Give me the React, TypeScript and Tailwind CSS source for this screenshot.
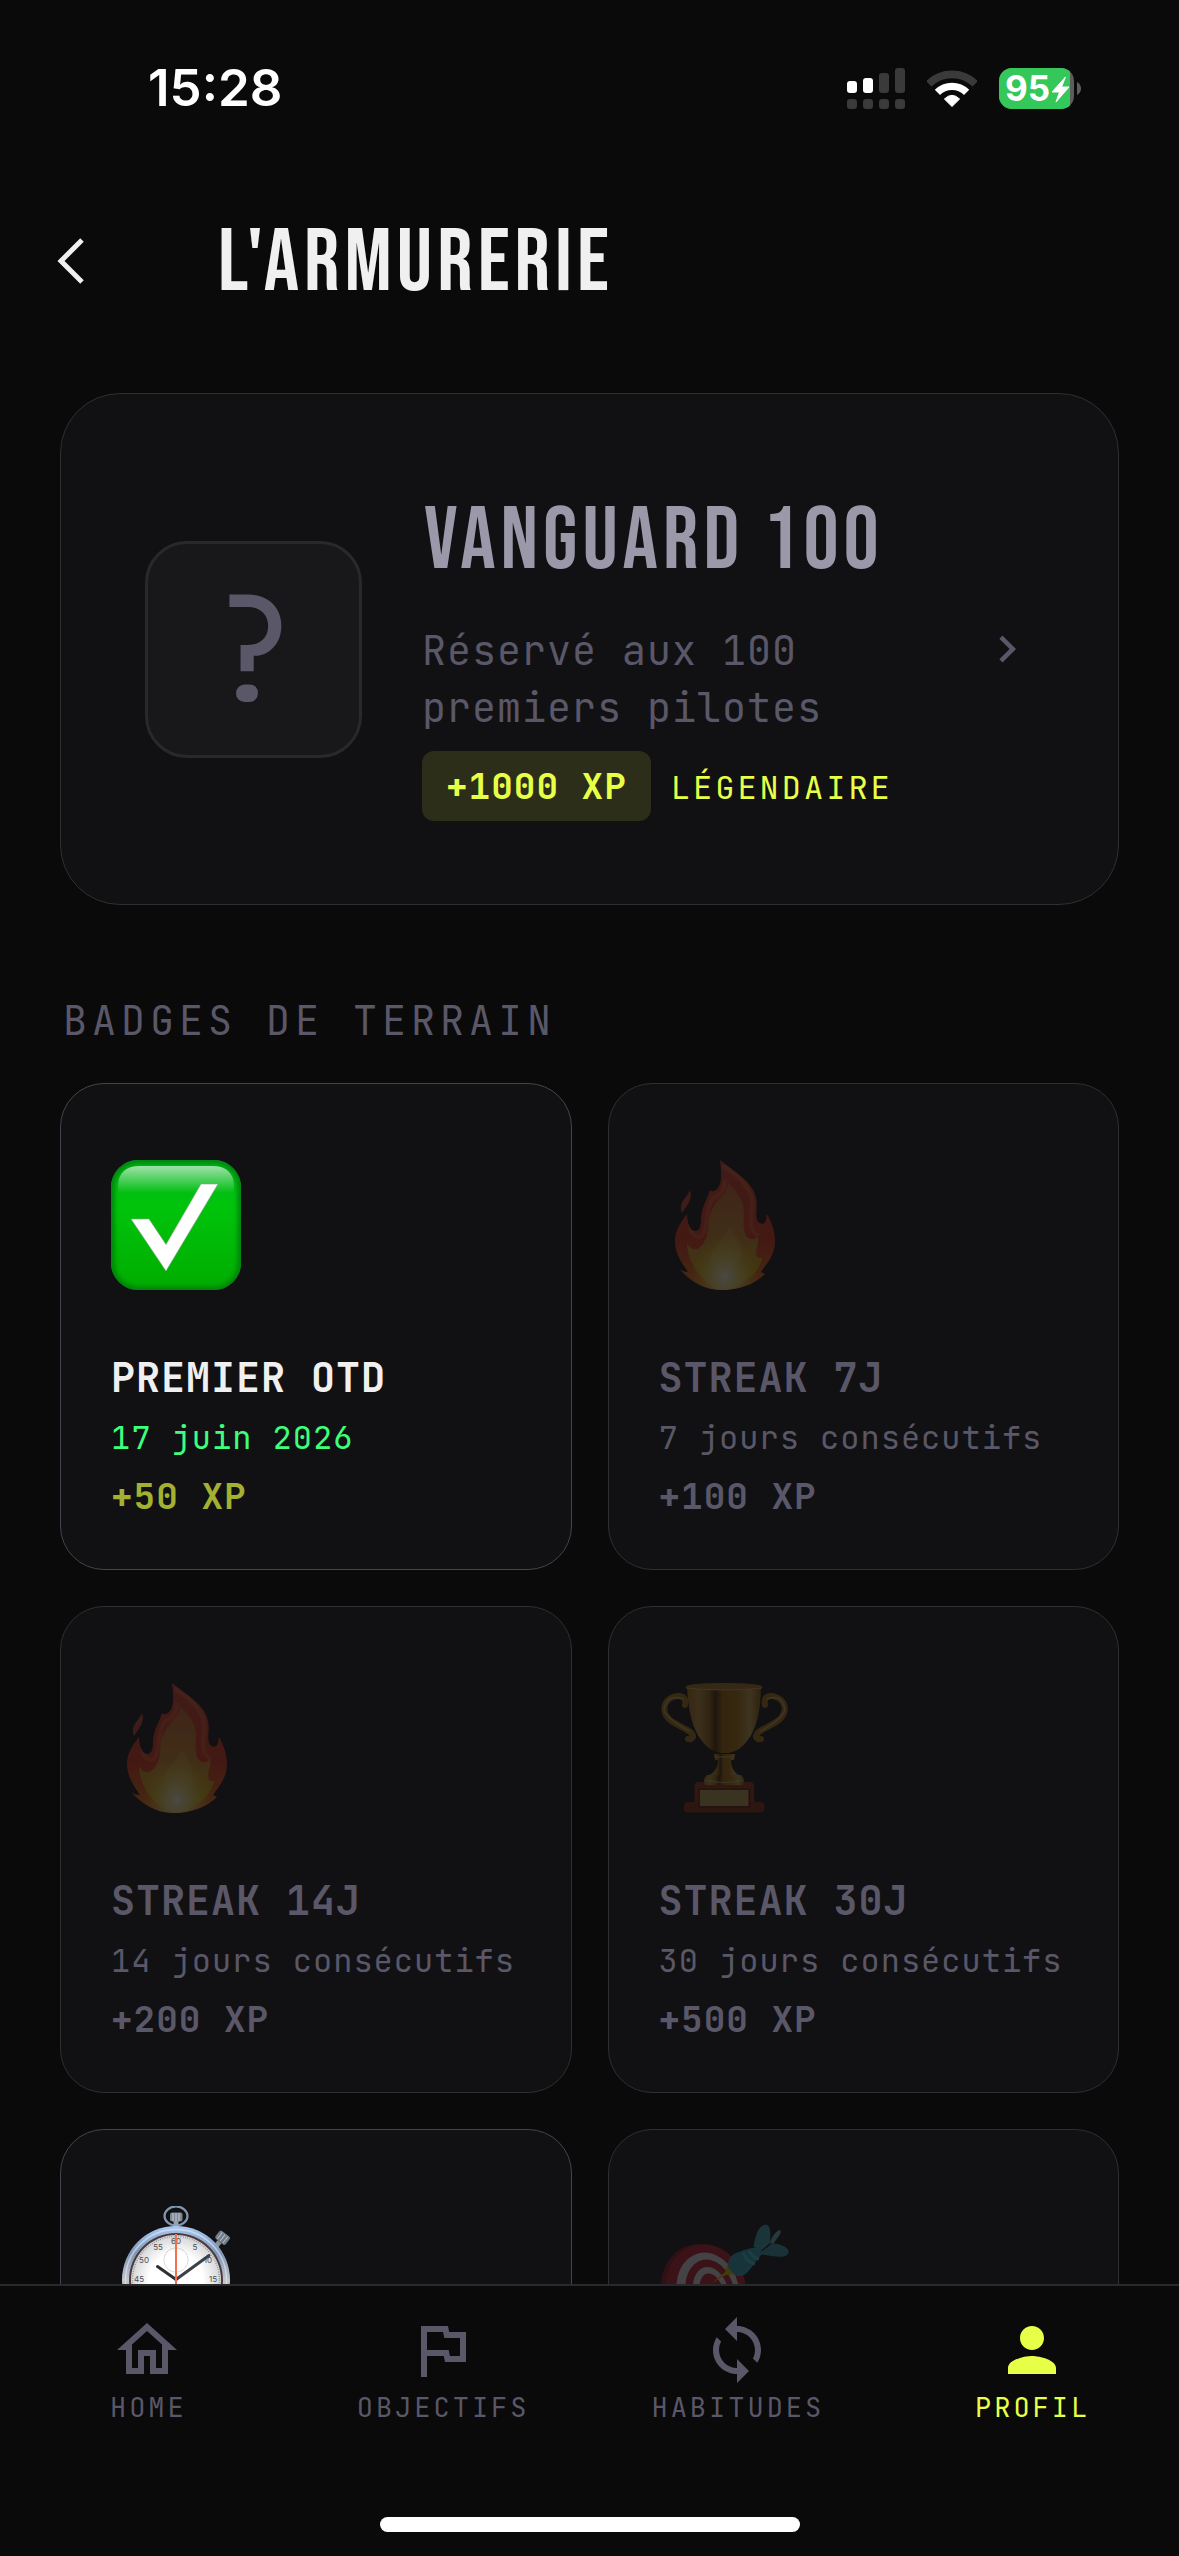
import type { ReactNode } from "react";
import { MdChevronRight, MdOutlineFlag, MdOutlineHome, MdPerson, MdSync } from "react-icons/md";

const mono = "font-['JetBrains_Mono','DejaVu_Sans_Mono',monospace]";
const display = "font-['Bebas_Neue','Oswald','Roboto',sans-serif]";

function SignalIcon() {
  return (
    <svg width="58" height="41" viewBox="0 0 58 41" aria-label="Réseau">
      <rect x="0" y="13" width="10" height="12" rx="3" fill="#fff" />
      <rect x="16" y="10" width="10" height="15" rx="3" fill="#fff" />
      <rect x="32" y="5" width="10" height="20" rx="3" fill="#3a3a3b" />
      <rect x="48" y="0" width="10" height="25" rx="3" fill="#3a3a3b" />
      {[0, 16, 32, 48].map((x) => (
        <rect key={x} x={x} y="31" width="10" height="10" rx="3" fill="#3a3a3b" />
      ))}
    </svg>
  );
}

function WifiIcon() {
  return (
    <svg width="50" height="41" viewBox="0 0 50 41" aria-label="Wi-Fi" fill="none">
      <path d="M1.8 15.8 A33.2 33.2 0 0 1 48.2 15.8" stroke="#3a3a3b" strokeWidth="7.6" />
      <path d="M10.4 24.4 A20.7 20.7 0 0 1 39.6 24.4" stroke="#fff" strokeWidth="7.4" />
      <path d="M25 38.5 L17.4 31 Q25 23.6 32.6 31 Z" fill="#fff" stroke="#fff" strokeLinejoin="round" />
    </svg>
  );
}

function BatteryIcon() {
  return (
    <svg width="82" height="41" viewBox="0 0 82 41" aria-label="Batterie">
      <clipPath id="battery-body">
        <rect width="75" height="41" rx="13" />
      </clipPath>
      <g clipPath="url(#battery-body)">
        <rect width="75" height="41" fill="#5c5c5d" />
        <rect width="71" height="41" fill="#34c759" />
      </g>
      <path d="M78 14 Q82 16.5 82 20.5 Q82 24.5 78 27 Z" fill="#5c5c5d" />
      <text x="6" y="33" fontSize="35" fontWeight="700" fill="#fff" fontFamily="Inter, sans-serif">
        95
      </text>
      <path d="M66.5 9 L53 24 H60.5 L57 34 L70 19 H62.5 Z" fill="#fff" stroke="#fff" strokeLinejoin="round" />
    </svg>
  );
}

function CheckEmoji() {
  return (
    <svg className="size-[130px]" viewBox="0 0 130 130" aria-hidden="true">
      <defs>
        <linearGradient id="check-body" x1="0" y1="0" x2="0" y2="1">
          <stop offset="0" stopColor="#00b41c" />
          <stop offset=".35" stopColor="#00c40c" />
          <stop offset="1" stopColor="#00ac00" />
        </linearGradient>
        <linearGradient id="check-gloss" x1="0" y1="0" x2="0" y2="1">
          <stop offset="0" stopColor="#fff" stopOpacity=".62" />
          <stop offset="1" stopColor="#fff" stopOpacity="0" />
        </linearGradient>
        <filter id="check-soft">
          <feGaussianBlur stdDeviation="2.5" />
        </filter>
        <clipPath id="check-clip">
          <rect width="130" height="130" rx="27" />
        </clipPath>
      </defs>
      <g clipPath="url(#check-clip)">
        <rect width="130" height="130" fill="url(#check-body)" />
        <rect width="130" height="130" rx="27" fill="none" stroke="#007a08" strokeWidth="6" filter="url(#check-soft)" />
        <path d="M7 33 V27 Q7 6 29 6 H101 Q123 6 123 27 V33 Z" fill="url(#check-gloss)" />
      </g>
      <path d="M20 59 H38 L55 84.5 L90 24 H107 L55 111 Z" fill="#fff" stroke="#8fa38f" strokeWidth=".6" />
    </svg>
  );
}

function FireEmoji() {
  return (
    <svg className="size-[130px]" viewBox="-16 0 130 130" aria-hidden="true">
      <defs>
        <linearGradient id="fire-outer" x1="0" y1="0" x2="0" y2="1">
          <stop offset="0" stopColor="#cc3c26" />
          <stop offset=".6" stopColor="#d83014" />
          <stop offset="1" stopColor="#e87410" />
        </linearGradient>
        <linearGradient id="fire-inner" x1="0" y1="0" x2="0" y2="1">
          <stop offset="0" stopColor="#cc6028" />
          <stop offset=".5" stopColor="#cc8426" />
          <stop offset="1" stopColor="#d8b800" />
        </linearGradient>
        <radialGradient id="fire-core" cx=".5" cy=".6" r=".5">
          <stop offset="0" stopColor="#f4f0d4" />
          <stop offset=".4" stopColor="#e8d880" stopOpacity=".75" />
          <stop offset="1" stopColor="#e0c400" stopOpacity="0" />
        </radialGradient>
        <clipPath id="fire-clip">
          <path d="M45 0 C60 12 78 22 81 38 C83 47 80 53 82 60 C84 65 90 65 91 60 C92 57 91 56 92 54 C97 63 100 72 100 81 C100 96 91 104 86 112 L90 114 C80 124 64 130 46 130 C30 130 14 121 5 109.5 Q9 112 13 112 C7 103 0 94 0 81 C0 70 6 62 12 54 C12 62 15 71 20 71 C25 71 26 66 26 58 C27 46 32 40 35 30 Q38 33 42 29 C48 23 46 10 45 0 Z" />
        </clipPath>
      </defs>
      <path d="M15 30 C18 40 12 45 7 53 C3 42 12 38 15 30 Z" fill="#c4402c" />
      <g clipPath="url(#fire-clip)">
        <rect x="-2" width="104" height="130" fill="url(#fire-outer)" />
        <path d="M48 6 C66 18 76 28 77 42 C77 60 72 70 84 76 M16 62 C14 72 20 80 27 76 C34 68 29 52 38 38 Q50 34 50 20" fill="none" stroke="#ff8a50" strokeOpacity=".3" strokeWidth="4" />
        <path d="M53 23 C64 34 69 42 69 54 C68 66 68 76 75 79 C79 80 82 78 83 76 C85 84 78 92 83 98 Q89 98 87 100 C82 116 66 126 48 131 C30 126 12 104 12 83 C15 90 22 92 28 84 C37 70 30 62 38 48 C43 38 53 34 53 23 Z" fill="url(#fire-inner)" />
        <ellipse cx="50" cy="108" rx="34" ry="42" fill="url(#fire-core)" />
        <path d="M54 66 C66 80 68 92 64 104 C58 116 42 116 36 102 C34 88 50 82 54 66 Z" fill="#f4d878" fillOpacity=".2" />
      </g>
    </svg>
  );
}

function TrophyEmoji() {
  return (
    <svg className="size-[130px]" viewBox="0 0 130 130" aria-hidden="true">
      <defs>
        <linearGradient id="gold" x1="0" y1="0" x2="1" y2="0">
          <stop offset="0" stopColor="#a86c10" />
          <stop offset=".16" stopColor="#b88c38" />
          <stop offset=".3" stopColor="#946008" />
          <stop offset=".38" stopColor="#482400" />
          <stop offset=".48" stopColor="#9c6000" />
          <stop offset=".68" stopColor="#a86c08" />
          <stop offset=".85" stopColor="#c09c48" />
          <stop offset="1" stopColor="#8c5808" />
        </linearGradient>
      </defs>
      <g fill="none" strokeLinecap="round">
        <g stroke="#a06c14" strokeWidth="6">
          <path d="M26 22 C28 12 20 12 14 14 C4 18 3 28 9 35 C17 44 34 46 34 54 Q32 57 29 56" />
          <path d="M106 22 C104 12 112 12 117 14 C127 18 128 28 122 35 C114 44 97 46 97 54 Q99 57 102 56" />
        </g>
        <g stroke="#c8a450" strokeWidth="1.5">
          <path d="M24 16 Q8 10 5 27 Q8 36 30 48" />
          <path d="M108 16 Q123 10 126 27 Q123 36 102 48" />
        </g>
      </g>
      <rect x="35.5" y="99" width="59.5" height="24" rx="4" fill="#8c2c10" />
      <rect x="25" y="119" width="80.5" height="10.5" rx="4" fill="#802408" />
      <path d="M28 3 H102 C102 26 98 46 88 58 Q82 67 70 70 H61 Q49 67 43 58 C33 46 29 26 28 3 Z" fill="url(#gold)" />
      <ellipse cx="65" cy="3.5" rx="38.5" ry="3.5" fill="#a07020" />
      <path d="M27 5 Q65 9 103 5" stroke="#c8a450" strokeWidth="1.2" fill="none" />
      <path d="M55 71 H76 L75 77 H72 Q72 88 80 92 H50 Q59 88 59 77 H56 Z" fill="url(#gold)" />
      <path d="M48 92 H82 Q87 96 84 102 H46 Q43 96 48 92 Z" fill="url(#gold)" />
      <path d="M46 97 Q65 102 84 97 M56 74 H75" stroke="#d0a860" strokeWidth="1" fill="none" />
      <rect x="41" y="107" width="48.5" height="16" fill="#b89850" />
      <rect x="40" y="106" width="50.5" height="18" fill="none" stroke="#5c1400" strokeWidth="1.5" />
    </svg>
  );
}

function StopwatchEmoji() {
  const numerals: [string, number, number][] = [
    ["60", 65, 38],
    ["55", 47, 44],
    ["5", 84, 44],
    ["50", 33, 57],
    ["10", 97, 57],
    ["45", 28, 76],
    ["15", 102, 76],
  ];
  return (
    <svg className="size-[130px]" viewBox="0 0 130 130" aria-hidden="true">
      <defs>
        <linearGradient id="steel" x1="0" y1="0" x2="0" y2="1">
          <stop offset="0" stopColor="#a9c9f2" />
          <stop offset=".25" stopColor="#7f96b8" />
          <stop offset=".5" stopColor="#c4c6c8" />
          <stop offset="1" stopColor="#77797c" />
        </linearGradient>
        <radialGradient id="dial">
          <stop offset=".6" stopColor="#fff" />
          <stop offset="1" stopColor="#d4d4d6" />
        </radialGradient>
      </defs>
      <ellipse cx="65" cy="10" rx="11.5" ry="9.5" fill="none" stroke="#8398b0" strokeWidth="2.2" />
      <rect x="59" y="6.5" width="12.5" height="9" rx="2" fill="#7d8794" />
      <path d="M62 7 V15 M65 7 V15 M68 7 V15" stroke="#c8d0da" strokeWidth="1" />
      <rect x="62.5" y="15" width="5" height="6" fill="#98a2ae" />
      <g transform="rotate(38 110 33)">
        <rect x="104" y="26" width="13" height="10" rx="2" fill="#6f7b88" />
        <path d="M107 27 V35 M110.5 27 V35 M114 27 V35" stroke="#b4bec8" strokeWidth="1" />
        <rect x="108" y="36" width="5" height="6" fill="#8a8f96" />
      </g>
      <circle cx="65" cy="74" r="54" fill="url(#steel)" />
      <circle cx="65" cy="74" r="50.5" fill="none" stroke="#e4edf8" strokeOpacity=".6" strokeWidth="1.5" />
      <circle cx="65" cy="74" r="47" fill="#4a3a40" />
      <circle cx="65" cy="74" r="45" fill="url(#dial)" />
      <circle cx="65" cy="74" r="43.5" fill="none" stroke="#777" strokeWidth="1.5" strokeDasharray=".6 1.7" />
      <circle cx="65" cy="54" r="12" fill="none" stroke="#b4b4b6" strokeWidth=".8" strokeDasharray="1 .6" />
      <g fill="#4a4e54" fontFamily="Inter, sans-serif" textAnchor="middle" fontSize="8">
        {numerals.map(([label, x, y]) => (
          <text key={label} x={x} y={y}>
            {label}
          </text>
        ))}
      </g>
      <path d="M46.5 60.5 L65 73.5" stroke="#2c3034" strokeWidth="3" strokeLinecap="round" />
      <path d="M98 49.5 L65 73.5" stroke="#3a4248" strokeWidth="3" strokeLinecap="round" />
      <path d="M65 28 V90" stroke="#f4704c" strokeWidth="2" />
    </svg>
  );
}

function TargetEmoji() {
  return (
    <svg className="size-[130px]" viewBox="0 0 130 130" aria-hidden="true">
      <g>
        <ellipse cx="42" cy="84" rx="40" ry="46" transform="rotate(-14 42 84)" fill="#8c101c" />
        <ellipse cx="47" cy="84" rx="40" ry="46" transform="rotate(-14 47 84)" fill="#b81824" />
        <ellipse cx="49" cy="85" rx="31" ry="39" transform="rotate(-14 49 85)" fill="#d8d8da" />
        <ellipse cx="51" cy="86" rx="24" ry="33" transform="rotate(-14 51 86)" fill="#b81824" />
        <ellipse cx="52" cy="87" rx="17.5" ry="26.5" transform="rotate(-14 52 87)" fill="#d8d8da" />
        <ellipse cx="53" cy="88" rx="12" ry="21" transform="rotate(-14 53 88)" fill="#b81824" />
      </g>
      <path d="M53 77 L66 66 L69 57 L78 68 L67 69 Z" fill="#d8b400" />
      <path d="M69.5 62 C68 52 73 48 80 46 C87 43 94 41 101 42 L103.5 47 L92 62 C86 71 80 71 76 69 Z" fill="#2c9cae" />
      <path d="M84 47 Q88 56 96 58 M90 45 Q94 52 100 53" stroke="#48c4d4" strokeWidth="3" fill="none" />
      <path d="M94.5 41 C96 31 99 19 107 18.5 C113 20 111 30 111 37 L103 44 Z" fill="#3c9cae" />
      <path d="M111 37 C112 31 118 24 121 24 C124 26 118 32 115 37 Z" fill="#6cacb8" />
      <path d="M99 47 Q108 43 113 37 C121 38 130 41 129.5 46 C128 54 114 50 99 48 Z" fill="#3494a6" />
    </svg>
  );
}

type Badge = {
  icon: ReactNode;
  title?: string;
  detail?: string;
  xp?: string;
  unlocked?: boolean;
};

const badges: Badge[] = [
  { icon: <CheckEmoji />, title: "PREMIER OTD", detail: "17 juin 2026", xp: "+50 XP", unlocked: true },
  { icon: <FireEmoji />, title: "STREAK 7J", detail: "7 jours consécutifs", xp: "+100 XP" },
  { icon: <FireEmoji />, title: "STREAK 14J", detail: "14 jours consécutifs", xp: "+200 XP" },
  { icon: <TrophyEmoji />, title: "STREAK 30J", detail: "30 jours consécutifs", xp: "+500 XP" },
  { icon: <StopwatchEmoji />, unlocked: true },
  { icon: <TargetEmoji /> },
];

function BadgeCard({ icon, title, detail, xp, unlocked }: Badge) {
  return (
    <article
      className={`min-h-[487px] rounded-[44px] border bg-[#111113] px-[50px] pt-[76px] pb-[45px] text-[#5a5768] ${
        unlocked ? "border-[#44444c]" : "border-[#2f2f33]"
      }`}
    >
      <div className={unlocked ? "" : "opacity-25"}>{icon}</div>
      {title && (
        <>
          <h3 className={`mt-[58px] text-[40px] leading-[60px] font-semibold tracking-[1px] ${unlocked ? "text-[#f0f0f0]" : ""}`}>
            {title}
          </h3>
          <p className={`text-[32px] leading-[60px] tracking-[1px] whitespace-nowrap ${unlocked ? "text-[#3dff7c]" : ""}`}>{detail}</p>
          <p className={`text-[36px] leading-[56px] font-semibold tracking-[1px] ${unlocked ? "text-[#a3b031]" : ""}`}>{xp}</p>
        </>
      )}
    </article>
  );
}

const tabs = [
  { label: "HOME", Icon: MdOutlineHome },
  { label: "OBJECTIFS", Icon: MdOutlineFlag },
  { label: "HABITUDES", Icon: MdSync },
  { label: "PROFIL", Icon: MdPerson, active: true },
];

export default function App() {
  return (
    <div className={`flex h-screen flex-col bg-[#0a0a0a] text-[#f0f0f0] ${mono}`}>
      <div className="flex h-[176px] shrink-0 items-center justify-between pr-[98px] pl-[148px] text-white">
        <time className="font-['Inter',sans-serif] text-[51px] font-semibold">15:28</time>
        <div className="flex items-center gap-[22px]">
          <SignalIcon />
          <WifiIcon />
          <BatteryIcon />
        </div>
      </div>

      <header className="flex h-[170px] shrink-0 items-center">
        <button type="button" aria-label="Retour" className="flex w-[141px] justify-center">
          <svg width="28" height="48" viewBox="0 0 28 48" fill="none" stroke="#f0f0f0" strokeWidth="5">
            <path d="M25 3 L4 24 L25 45" />
          </svg>
        </button>
        <h1 className={`ml-[77px] pt-1.5 text-[88px] leading-[108px] tracking-[5px] ${display}`}>L'ARMURERIE</h1>
      </header>

      <main className="min-h-0 flex-1 overflow-hidden px-[60px] pt-[47px]">
        <a href="#vanguard" className="flex items-center rounded-[60px] border border-[#2f2f33] bg-[#111113] px-[84px] py-[83px]">
          <div className="flex size-[217px] shrink-0 items-center justify-center rounded-[42px] border-3 border-[#29292c] bg-[#18181a] text-[146px] leading-none text-[#5a5768]">
            ?
          </div>
          <div className="ml-[60px] flex-1">
            <h2 className={`pl-0.5 text-[88px] leading-[130px] tracking-[5px] whitespace-nowrap text-[#9b98a9] ${display}`}>
              VANGUARD 100
            </h2>
            <p className="mt-[15px] text-[40px] leading-[57px] tracking-[1px] text-[#5a5768]">
              Réservé aux 100
              <br />
              premiers pilotes
            </p>
            <div className="mt-[15px] flex items-baseline gap-5 text-[#e8ff47]">
              <span className="rounded-xl bg-[#2c2e1a] px-6 text-[36px] leading-[70px] font-semibold tracking-[1px]">+1000 XP</span>
              <span className="text-[32px] leading-[60px] tracking-[3px]">LÉGENDAIRE</span>
            </div>
          </div>
          <MdChevronRight className="size-[54px] shrink-0 text-[#5a5768]" />
        </a>

        <h2 className="mt-[88px] ml-[3px] text-[40px] leading-[56px] tracking-[5px] text-[#5a5768]">BADGES DE TERRAIN</h2>

        <section className="mt-[34px] grid grid-cols-2 gap-9">
          {badges.map((badge, i) => (
            <BadgeCard key={i} {...badge} />
          ))}
        </section>
      </main>

      <nav className="shrink-0 border-t-2 border-[#29292c] pt-7">
        <div className="flex">
          {tabs.map(({ label, Icon, active }) => (
            <a
              key={label}
              href={`#${label.toLowerCase()}`}
              className={`flex flex-1 flex-col items-center gap-[5px] ${active ? "text-[#e8ff47]" : "text-[#5a5768]"}`}
            >
              <Icon className="size-[72px]" />
              <span className="pl-0.5 text-[27px] leading-8 tracking-[3px]">{label}</span>
            </a>
          ))}
        </div>
        <div className="mx-auto mt-[94px] mb-6 h-[15px] w-[420px] rounded-full bg-white" />
      </nav>
    </div>
  );
}
